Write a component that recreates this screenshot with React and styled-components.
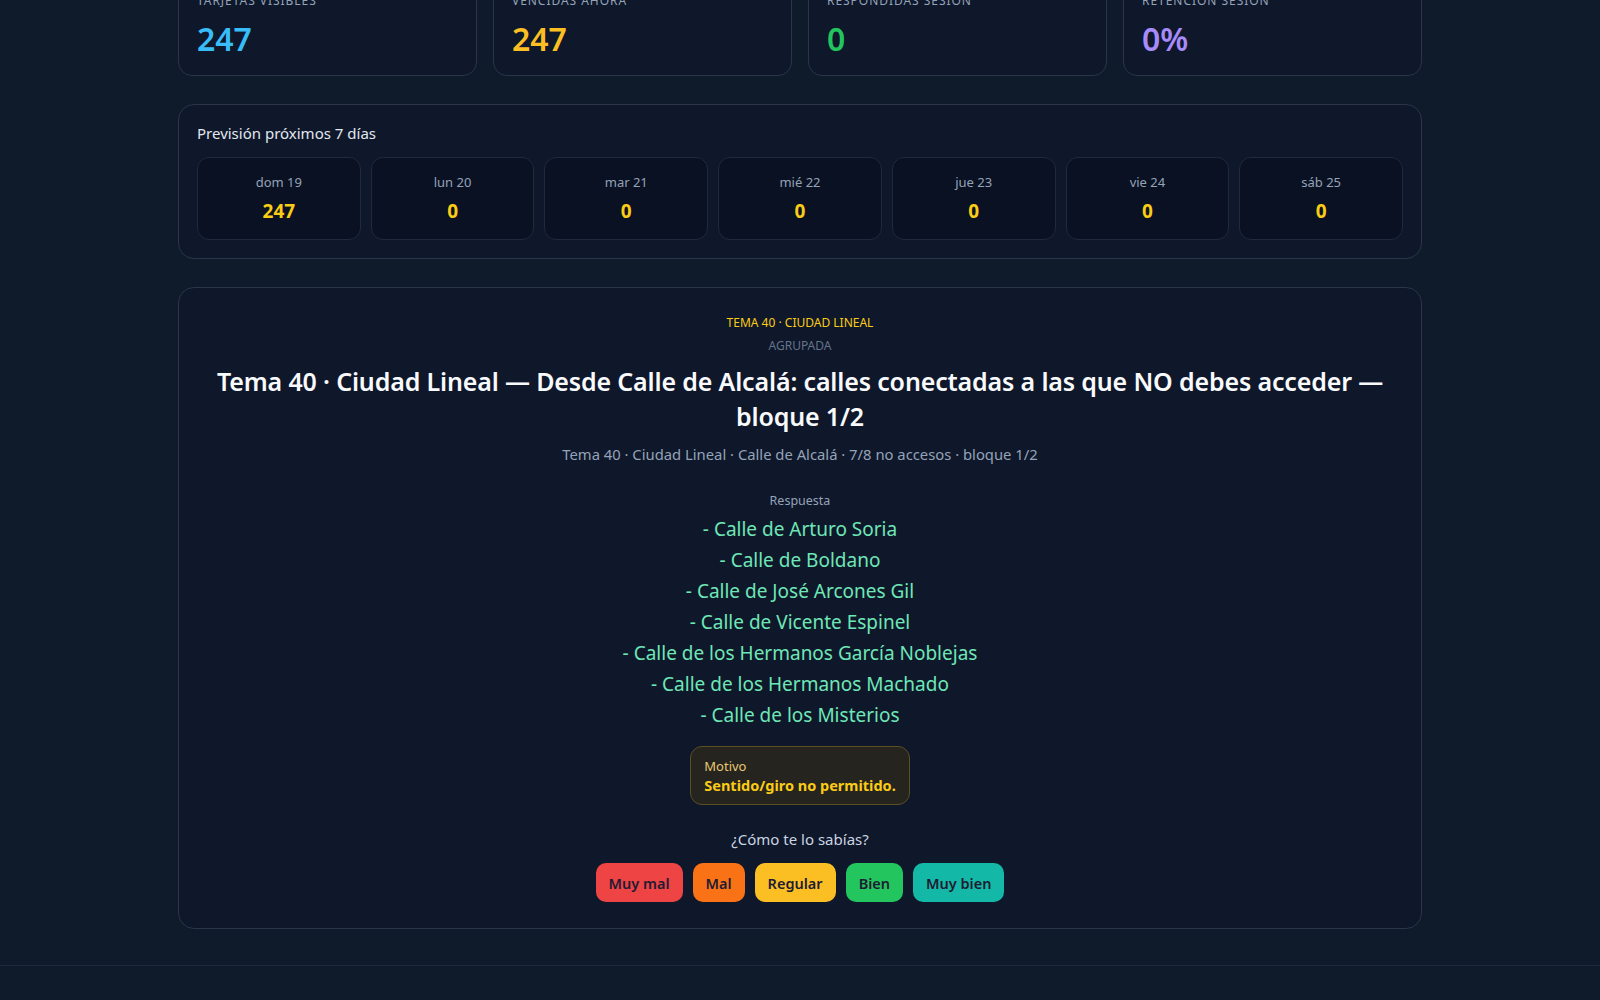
import React from 'react'
import styled, { createGlobalStyle } from 'styled-components'

const GlobalStyle = createGlobalStyle`
  html, body {
    margin: 0;
    padding: 0;
    background: #0f1a2b;
  }
  body {
    font-family: "Segoe UI", "Noto Sans", "Open Sans", sans-serif;
    color: #e2e8f0;
  }
  * {
    box-sizing: border-box;
  }
`

const stats = [
  { label: 'Tarjetas visibles', value: '247', color: '#38bdf8' },
  { label: 'Vencidas ahora', value: '247', color: '#fbbf24' },
  { label: 'Respondidas sesión', value: '0', color: '#22c55e' },
  { label: 'Retención sesión', value: '0%', color: '#a78bfa' },
]

const forecast = [
  { day: 'dom 19', count: 247 },
  { day: 'lun 20', count: 0 },
  { day: 'mar 21', count: 0 },
  { day: 'mié 22', count: 0 },
  { day: 'jue 23', count: 0 },
  { day: 'vie 24', count: 0 },
  { day: 'sáb 25', count: 0 },
]

const answer = [
  'Calle de Arturo Soria',
  'Calle de Boldano',
  'Calle de José Arcones Gil',
  'Calle de Vicente Espinel',
  'Calle de los Hermanos García Noblejas',
  'Calle de los Hermanos Machado',
  'Calle de los Misterios',
]

const grades = [
  { label: 'Muy mal', bg: '#ef4444' },
  { label: 'Mal', bg: '#f97316' },
  { label: 'Regular', bg: '#fbbf24' },
  { label: 'Bien', bg: '#22c55e' },
  { label: 'Muy bien', bg: '#14b8a6' },
]

const Page = styled.div`
  min-height: 1000px;
  display: flex;
  flex-direction: column;
`

// the view is scrolled a little, so the stat row starts above the top edge
const Container = styled.main`
  width: 1244px;
  margin: -26px auto 0;
  padding-bottom: 36px;
  display: flex;
  flex-direction: column;
  gap: 28px;
`

const StatsRow = styled.div`
  display: grid;
  grid-template-columns: repeat(4, 1fr);
  gap: 16px;
`

const StatCard = styled.div`
  background: #0f172a;
  border: 1px solid #2a3548;
  border-radius: 14px;
  padding: 18px 18px 16px;
  display: flex;
  flex-direction: column;
  gap: 10px;
`

const StatLabel = styled.div`
  font-size: 12px;
  line-height: 16px;
  letter-spacing: 0.08em;
  text-transform: uppercase;
  color: #94a3b8;
`

const StatValue = styled.div`
  font-size: 32px;
  line-height: 40px;
  font-weight: 600;
  color: ${p => p.color};
`

const Panel = styled.section`
  background: #0f172a;
  border: 1px solid #2a3548;
  border-radius: 16px;
  padding: 18px;
`

const PanelTitle = styled.div`
  font-size: 15px;
  line-height: 20px;
  color: #e2e8f0;
  margin-bottom: 14px;
`

const DayGrid = styled.div`
  display: grid;
  grid-template-columns: repeat(7, 1fr);
  gap: 10px;
`

const DayCard = styled.div`
  background: #0a1122;
  border: 1px solid #1f2a3c;
  border-radius: 12px;
  padding: 15px 10px 15px;
  display: flex;
  flex-direction: column;
  align-items: center;
  gap: 7px;
`

const DayLabel = styled.div`
  font-size: 13px;
  line-height: 18px;
  color: #94a3b8;
`

const DayCount = styled.div`
  font-size: 19px;
  line-height: 26px;
  font-weight: 700;
  color: #facc15;
`

const StudyCard = styled.section`
  background: #0f172a;
  border: 1px solid #2a3548;
  border-radius: 16px;
  padding: 27px 20px 26px;
  display: flex;
  flex-direction: column;
  align-items: center;
  text-align: center;
`

const Topic = styled.div`
  font-size: 12px;
  line-height: 16px;
  color: #facc15;
  text-transform: uppercase;
`

const Kind = styled.div`
  margin-top: 7px;
  font-size: 12px;
  line-height: 16px;
  color: #64748b;
  text-transform: uppercase;
`

const Question = styled.h2`
  margin: 10px 0 0;
  font-size: 25px;
  line-height: 35px;
  font-weight: 600;
  letter-spacing: -0.15px;
  color: #f8fafc;
`

const Meta = styled.div`
  margin-top: 10px;
  font-size: 14.8px;
  line-height: 20px;
  color: #94a3b8;
`

const AnswerLabel = styled.div`
  margin-top: 28px;
  font-size: 12.5px;
  line-height: 18px;
  color: #94a3b8;
`

const AnswerList = styled.div`
  margin-top: 4px;
  display: flex;
  flex-direction: column;
`

const AnswerLine = styled.div`
  font-size: 19px;
  line-height: 31px;
  color: #6ee7b7;
`

const Reason = styled.div`
  margin-top: 15px;
  padding: 10px 13px 9px;
  border-radius: 12px;
  background: #26241e;
  border: 1px solid #5b4f23;
  text-align: left;
`

const ReasonLabel = styled.div`
  font-size: 13px;
  line-height: 18px;
  color: #e8c872;
`

const ReasonText = styled.div`
  font-size: 14.5px;
  line-height: 20px;
  font-weight: 700;
  color: #facc15;
`

const Prompt = styled.div`
  margin-top: 24px;
  font-size: 15px;
  line-height: 20px;
  color: #cbd5e1;
`

const GradeRow = styled.div`
  margin-top: 14px;
  display: flex;
  gap: 10px;
`

const GradeButton = styled.button`
  border: none;
  border-radius: 10px;
  padding: 10px 13px 9px;
  font-family: inherit;
  font-size: 14.5px;
  line-height: 20px;
  font-weight: 600;
  color: #1e1b33;
  background: ${p => p.bg};
  cursor: pointer;
`

const Footer = styled.footer`
  border-top: 1px solid #1e293b;
  flex: 1;
`

export default function App() {
  return (
    <Page>
      <GlobalStyle />
      <Container>
        <StatsRow>
          {stats.map(s => (
            <StatCard key={s.label}>
              <StatLabel>{s.label}</StatLabel>
              <StatValue color={s.color}>{s.value}</StatValue>
            </StatCard>
          ))}
        </StatsRow>

        <Panel>
          <PanelTitle>Previsión próximos 7 días</PanelTitle>
          <DayGrid>
            {forecast.map(d => (
              <DayCard key={d.day}>
                <DayLabel>{d.day}</DayLabel>
                <DayCount>{d.count}</DayCount>
              </DayCard>
            ))}
          </DayGrid>
        </Panel>

        <StudyCard>
          <Topic>Tema 40 · Ciudad Lineal</Topic>
          <Kind>Agrupada</Kind>
          <Question>
            Tema 40 · Ciudad Lineal — Desde Calle de Alcalá: calles conectadas a las que NO debes acceder — bloque 1/2
          </Question>
          <Meta>Tema 40 · Ciudad Lineal · Calle de Alcalá · 7/8 no accesos · bloque 1/2</Meta>

          <AnswerLabel>Respuesta</AnswerLabel>
          <AnswerList>
            {answer.map(a => (
              <AnswerLine key={a}>- {a}</AnswerLine>
            ))}
          </AnswerList>

          <Reason>
            <ReasonLabel>Motivo</ReasonLabel>
            <ReasonText>Sentido/giro no permitido.</ReasonText>
          </Reason>

          <Prompt>¿Cómo te lo sabías?</Prompt>
          <GradeRow>
            {grades.map(g => (
              <GradeButton key={g.label} bg={g.bg}>
                {g.label}
              </GradeButton>
            ))}
          </GradeRow>
        </StudyCard>
      </Container>
      <Footer />
    </Page>
  )
}
